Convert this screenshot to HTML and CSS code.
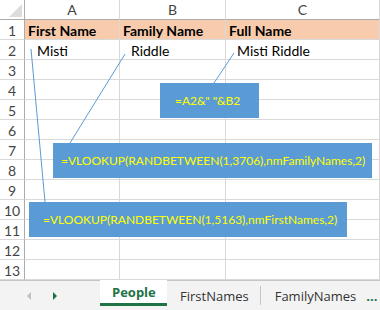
FILE: index.html
```html
<!DOCTYPE html>
<html lang="en">
<head>
    <meta charset="UTF-8">
    <title>People - Random Names</title>
    <link rel="stylesheet" href="styles.css">
</head>
<body>
    <div class="sheet">
        <div class="grid">
            <div class="corner"><span class="corner-tri"></span></div>
            <div class="col-head">A</div>
            <div class="col-head">B</div>
            <div class="col-head">C</div>

            <div class="row-head">1</div>
            <div class="cell title">First Name</div>
            <div class="cell title">Family Name</div>
            <div class="cell title">Full Name</div>

            <div class="row-head">2</div>
            <div class="cell first">Misti</div>
            <div class="cell indent">Riddle</div>
            <div class="cell indent">Misti Riddle</div>

            <div class="row-head">3</div><div class="cell"></div><div class="cell"></div><div class="cell"></div>
            <div class="row-head">4</div><div class="cell"></div><div class="cell"></div><div class="cell"></div>
            <div class="row-head">5</div><div class="cell"></div><div class="cell"></div><div class="cell"></div>
            <div class="row-head">6</div><div class="cell"></div><div class="cell"></div><div class="cell"></div>
            <div class="row-head">7</div><div class="cell"></div><div class="cell"></div><div class="cell"></div>
            <div class="row-head">8</div><div class="cell"></div><div class="cell"></div><div class="cell"></div>
            <div class="row-head">9</div><div class="cell"></div><div class="cell"></div><div class="cell"></div>
            <div class="row-head">10</div><div class="cell"></div><div class="cell"></div><div class="cell"></div>
            <div class="row-head">11</div><div class="cell"></div><div class="cell"></div><div class="cell"></div>
            <div class="row-head">12</div><div class="cell"></div><div class="cell"></div><div class="cell"></div>
            <div class="row-head">13</div><div class="cell"></div><div class="cell"></div><div class="cell"></div>
        </div>

        <svg class="connectors" width="380" height="280" viewBox="0 0 380 280">
            <line x1="31" y1="49" x2="45" y2="202"/>
            <line x1="125" y1="54" x2="70" y2="143"/>
            <line x1="234" y1="53" x2="214" y2="83"/>
        </svg>

        <div class="callout callout-full">=A2&amp;" "&amp;B2</div>
        <div class="callout callout-family">=VLOOKUP(RANDBETWEEN(1,3706),nmFamilyNames,2)</div>
        <div class="callout callout-first">=VLOOKUP(RANDBETWEEN(1,5163),nmFirstNames,2)</div>
    </div>

    <div class="tabs">
        <div class="tab-nav">
            <span class="arrow arrow-left"></span>
            <span class="arrow arrow-right"></span>
        </div>
        <div class="tab active">People</div>
        <div class="tab">FirstNames</div>
        <div class="tab tab-last">FamilyNames</div>
        <div class="tab-more">...</div>
    </div>
</body>
</html>
```

FILE: styles.css
```css
:root {
    --grid-line: #d9d9d9;
    --head-line: #ababab;
    --head-text: #444;
    --title-fill: #f8cbad;
    --callout-blue: #5b9bd5;
    --callout-text: #ffff00;
    --excel-green: #217346;
}

* {
    margin: 0;
    padding: 0;
    box-sizing: border-box;
}

body {
    width: 380px;
    height: 310px;
    overflow: hidden;
    background: #fff;
    font-family: Lato, "Open Sans", sans-serif;
    color: #000;
}

.sheet {
    position: relative;
    height: 280px;
    overflow: hidden;
}

.grid {
    display: grid;
    grid-template-columns: 25px 95px 106px 154px;
    grid-auto-rows: 20px;
}

.corner,
.col-head,
.row-head {
    background: #fff;
    color: var(--head-text);
    font-size: 14px;
    display: flex;
    align-items: center;
    justify-content: center;
}

.corner {
    border-right: 1px solid var(--head-line);
    border-bottom: 1px solid var(--head-line);
    position: relative;
}

.corner-tri {
    position: absolute;
    right: 2px;
    bottom: 2px;
    width: 0;
    height: 0;
    border-left: 13px solid transparent;
    border-bottom: 13px solid #dcdcdc;
}

.col-head {
    border-right: 1px solid var(--grid-line);
    border-bottom: 1px solid var(--head-line);
}

.row-head {
    border-right: 1px solid var(--head-line);
    border-bottom: 1px solid var(--grid-line);
    padding-top: 1px;
}

.cell {
    border-right: 1px solid var(--grid-line);
    border-bottom: 1px solid var(--grid-line);
    font-size: 14px;
    padding: 1px 0 0 4px;
    display: flex;
    align-items: center;
    white-space: nowrap;
}

.cell.title {
    background: var(--title-fill);
    font-weight: bold;
    padding-left: 3px;
}

.cell.first {
    padding-left: 12px;
}

.cell.indent {
    padding-left: 11px;
}

.connectors {
    position: absolute;
    top: 0;
    left: 0;
}

.connectors line {
    stroke: var(--callout-blue);
    stroke-width: 1;
}

.callout {
    position: absolute;
    height: 35px;
    background: var(--callout-blue);
    color: var(--callout-text);
    font-size: 12px;
    display: flex;
    align-items: center;
    white-space: nowrap;
}

.callout-full {
    left: 160px;
    top: 83px;
    width: 99px;
    padding-left: 15px;
}

.callout-family {
    left: 53px;
    top: 143px;
    width: 319px;
    padding-left: 8px;
}

.callout-first {
    left: 29px;
    top: 202px;
    width: 318px;
    padding-left: 14px;
}

.tabs {
    height: 30px;
    background: #f3f3f3;
    border-top: 1px solid #c6c6c6;
    display: flex;
    align-items: stretch;
    font-family: "Open Sans", Lato, sans-serif;
    font-size: 13px;
}

.tabs > * {
    flex-shrink: 0;
}

.tab-nav {
    width: 100px;
    display: flex;
    align-items: center;
    gap: 22px;
    padding-left: 27px;
}

.arrow {
    width: 0;
    height: 0;
    border-top: 4px solid transparent;
    border-bottom: 4px solid transparent;
}

.arrow-left {
    border-right: 4px solid #c0c0c0;
}

.arrow-right {
    border-left: 4px solid var(--excel-green);
}

.tab {
    display: flex;
    align-items: center;
    padding: 0 11px 0 13px;
    color: #333;
    border-right: 1px solid #c6c6c6;
    margin: 5px 0 5px;
}

.tab.active {
    width: 67px;
    margin: -1px 0 4px;
    padding: 0 0 0 12px;
    background: #fff;
    color: var(--excel-green);
    font-weight: bold;
    border-right: none;
    border-bottom: 3px solid var(--excel-green);
}

.tab-last {
    border-right: none;
    padding: 0 10px 0 14px;
}

.tab-more {
    display: flex;
    align-items: center;
    color: var(--excel-green);
    font-weight: bold;
}
```
